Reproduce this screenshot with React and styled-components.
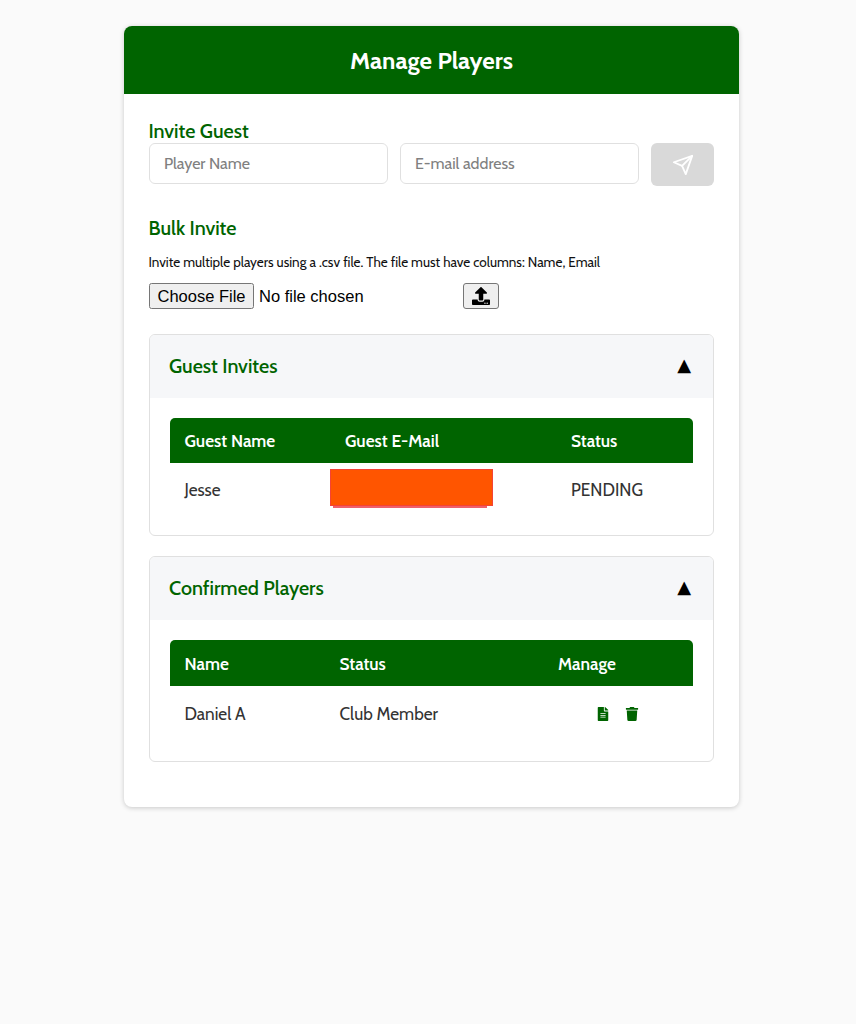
import React from "react";
import styled, { createGlobalStyle } from "styled-components";
import { FiSend } from "react-icons/fi";
import { FaUpload, FaFileAlt, FaTrash } from "react-icons/fa";

const green = "#006400";
const font = `"Cabin", "Lato", "Open Sans", sans-serif`;

const Global = createGlobalStyle`
  html, body { margin: 0; padding: 0; background: #fafafa; height: 100%; }
  body { font-family: ${font}; color: #333; }
  * { box-sizing: border-box; }
`;
const Page = styled.div`
  width: 856px;
  min-height: 1024px;
  padding: 26px 117px 0 124px;
`;
const Card = styled.main`
  width: 615px;
  height: 781px;
  background: #fff;
  border-radius: 8px;
  box-shadow: 0 1px 5px rgba(0, 0, 0, 0.2);
  overflow: hidden;
`;
const Header = styled.header`
  height: 68px;
  background: ${green};
  color: #fff;
  display: flex;
  align-items: center;
  justify-content: center;
  font-size: 24.2px;
  font-weight: 700;
`;
const Body = styled.div`
  padding: 26px 25px 0;
`;
const SectionTitle = styled.h2`
  margin: 0 0 0 -0.5px;
  color: ${green};
  font-size: 19.8px;
  font-weight: 500;
  line-height: 23px;
`;
const InviteRow = styled.form`
  display: flex;
  gap: 12px;
  margin-bottom: 31px;
`;
const TextInput = styled.input`
  width: 239px;
  height: 41px;
  padding: 0 14px;
  border: 1px solid #e0e0e0;
  border-radius: 6px;
  font: 400 16px ${font};
  &::placeholder { color: #808080; opacity: 1; }
`;
const SendButton = styled.button`
  width: 63px;
  height: 43px;
  border: 0;
  border-radius: 6px;
  background: #d9d9d9;
  color: #fff;
  display: flex;
  align-items: center;
  justify-content: center;
  font-size: 22px;
  padding: 0;
`;
const Hint = styled.p`
  margin: 13px 0 0 -0.5px;
  font-size: 13.5px;
  line-height: 18px;
  color: #111;
`;
const UploadRow = styled.div`
  display: flex;
  margin-top: 12px;
  margin-bottom: 25px;
  height: 26px;
`;
const FileField = styled.input`
  width: 314px;
  height: 26px;
  font: 16.5px "Liberation Sans", Arial, sans-serif;
  color: #000;
  &::file-selector-button {
    width: 105px;
    height: 26px;
    margin-right: 5px;
    padding: 0;
  }
`;
const UploadButton = styled.button`
  width: 36px;
  height: 26px;
  padding: 0;
  border: 1px solid #767676;
  border-radius: 3px;
  background: #efefef;
  color: #000;
  display: flex;
  align-items: center;
  justify-content: center;
  font-size: 18px;
`;
const Panel = styled.section`
  border: 1px solid #e0e0e0;
  border-radius: 6px;
  height: ${(p) => p.$height}px;
  margin-bottom: 20px;
  overflow: hidden;
`;
const PanelHead = styled.div`
  height: 63px;
  background: #f6f7f9;
  padding: 0 22px 2px 19px;
  display: flex;
  align-items: center;
  justify-content: space-between;
  color: ${green};
  font-size: 19.8px;
  font-weight: 500;
`;
const Caret = styled.span`
  color: #000;
  font: 18px "DejaVu Sans", sans-serif;
  padding-bottom: 3px;
`;
const TableWrap = styled.div`
  padding: 20px 20px 0;
`;
const Row = styled.div`
  display: grid;
  grid-template-columns: ${(p) => p.$cols};
  align-items: center;
`;
const HeadRow = styled(Row)`
  height: ${(p) => p.$height}px;
  background: ${green};
  color: #fff;
  font-size: 17.2px;
  font-weight: 600;
  border-radius: 5px 5px 0 0;
`;
const DataRow = styled(Row)`
  height: ${(p) => p.$height}px;
  font-size: 17.2px;
  color: #333;
`;
const Cell = styled.div`
  padding-left: 14.5px;
  position: relative;
`;
const Redaction = styled.div`
  position: absolute;
  left: -0.5px;
  top: -21px;
  width: 163px;
  height: 37px;
  background: #ff5500;
  border: 1px solid #f44336;
  &::after {
    content: "";
    position: absolute;
    left: 2px;
    right: 5px;
    bottom: -3px;
    height: 2px;
    background: #f0606a;
  }
`;
const Actions = styled.div`
  display: flex;
  gap: 15px;
  padding-left: 38px;
  color: ${green};
  font-size: 14px;
  align-items: center;
`;

export default function App() {
  return (
    <Page>
      <Global />
      <Card>
        <Header>Manage Players</Header>
        <Body>
          <SectionTitle>Invite Guest</SectionTitle>
          <InviteRow>
            <TextInput placeholder="Player Name" />
            <TextInput placeholder="E-mail address" />
            <SendButton type="button"><FiSend /></SendButton>
          </InviteRow>
          <SectionTitle>Bulk Invite</SectionTitle>
          <Hint>Invite multiple players using a .csv file. The file must have columns: Name, Email</Hint>
          <UploadRow>
            <FileField type="file" />
            <UploadButton type="button"><FaUpload /></UploadButton>
          </UploadRow>
          <Panel $height={202}>
            <PanelHead>Guest Invites<Caret>▲</Caret></PanelHead>
            <TableWrap>
              <HeadRow $cols="160.5px 226px 1fr" $height={45}>
                <Cell>Guest Name</Cell>
                <Cell>Guest E-Mail</Cell>
                <Cell>Status</Cell>
              </HeadRow>
              <DataRow $cols="160.5px 226px 1fr" $height={53}>
                <Cell>Jesse</Cell>
                <Cell><Redaction /></Cell>
                <Cell>PENDING</Cell>
              </DataRow>
            </TableWrap>
          </Panel>
          <Panel $height={206}>
            <PanelHead>Confirmed Players<Caret>▲</Caret></PanelHead>
            <TableWrap>
              <HeadRow $cols="155px 218.5px 1fr" $height={46}>
                <Cell>Name</Cell>
                <Cell>Status</Cell>
                <Cell>Manage</Cell>
              </HeadRow>
              <DataRow $cols="155px 218.5px 1fr" $height={55}>
                <Cell>Daniel A</Cell>
                <Cell>Club Member</Cell>
                <Cell>
                  <Actions><FaFileAlt /><FaTrash /></Actions>
                </Cell>
              </DataRow>
            </TableWrap>
          </Panel>
        </Body>
      </Card>
    </Page>
  );
}
